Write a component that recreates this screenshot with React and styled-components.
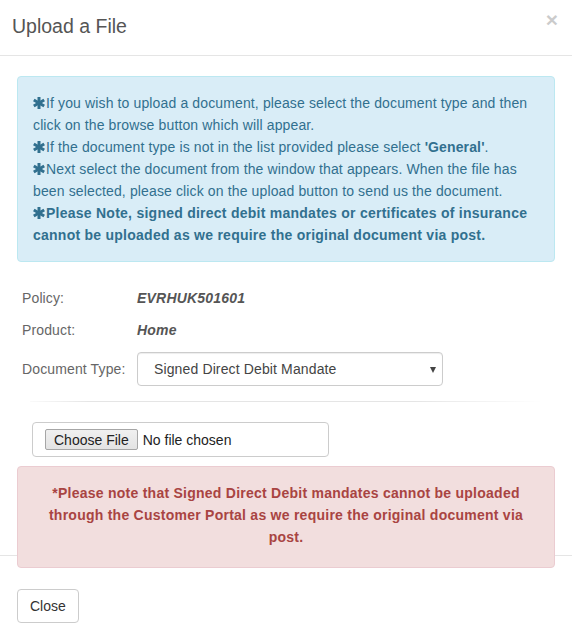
import React from 'react';
import styled, { createGlobalStyle } from 'styled-components';

const GlobalStyle = createGlobalStyle`
  * { box-sizing: border-box; }
  body {
    margin: 0;
    background: #fff;
    font-family: "Liberation Sans", Arial, sans-serif;
    font-size: 14px;
    color: #333;
  }
`;

const Modal = styled.div`
  width: 572px;
  min-height: 639px;
  background: #fff;
`;

const Header = styled.div`
  height: 56px;
  padding: 15px 14px 0 12px;
  border-bottom: 1px solid #e5e5e5;
  display: flex;
  justify-content: space-between;
  align-items: flex-start;
`;

const Title = styled.h4`
  margin: 0;
  font-size: 19.5px;
  line-height: 22px;
  font-weight: 400;
  color: #555;
`;

const CloseX = styled.button`
  border: 0;
  background: none;
  padding: 0;
  margin-top: -6px;
  font-family: "Liberation Sans", Arial, sans-serif;
  font-size: 21px;
  font-weight: 700;
  line-height: 21px;
  color: #000;
  opacity: 0.2;
  cursor: pointer;
`;

const Body = styled.div`
  padding: 20px 17px 0;
`;

const Alert = styled.div`
  border: 1px solid ${p => p.border};
  background: ${p => p.bg};
  color: ${p => p.color};
  border-radius: 4px;
  padding: ${p => p.pad || '15px'};
  line-height: 22px;
  font-size: 14px;
  letter-spacing: 0.13px;
`;

const DangerAlert = styled(Alert)`
  position: relative;
  z-index: 1;
  margin-top: 9px;
  margin-bottom: -13px;
  text-align: center;
  font-weight: 700;
  letter-spacing: 0.25px;
`;

const Note = styled.div`
  font-weight: ${p => (p.strong ? 700 : 400)};
  letter-spacing: ${p => (p.strong ? '0.25px' : 'inherit')};
`;

const Star = styled.svg`
  width: 12px;
  height: 12px;
  margin-right: 1px;
  vertical-align: -1px;
`;

const Asterisk = () => (
  <Star viewBox="0 0 12 12">
    <g stroke="currentColor" strokeWidth="3">
      <line x1="6" y1="0" x2="6" y2="12" />
      <line x1="0.8" y1="3" x2="11.2" y2="9" />
      <line x1="0.8" y1="9" x2="11.2" y2="3" />
    </g>
  </Star>
);

const Details = styled.div`
  margin-top: 26px;
  padding-left: 5px;
  display: grid;
  grid-template-columns: 115px 306px;
  row-gap: 12px;
  align-items: center;
  line-height: 20px;
  letter-spacing: 0.13px;
`;

const Label = styled.div`
  color: #666;
`;

const Value = styled.div`
  color: #555;
  font-weight: 700;
  font-style: italic;
  letter-spacing: 0.2px;
`;

const SelectWrap = styled.div`
  position: relative;

  &::after {
    content: '';
    position: absolute;
    right: 7px;
    top: 15px;
    border-left: 3.5px solid transparent;
    border-right: 3.5px solid transparent;
    border-top: 6px solid #444;
    pointer-events: none;
  }
`;

const Select = styled.select`
  appearance: none;
  width: 100%;
  height: 34px;
  padding: 0 24px 0 16px;
  border: 1px solid #ccc;
  border-radius: 4px;
  background: #fff;
  font-family: "Liberation Sans", Arial, sans-serif;
  font-size: 14px;
  letter-spacing: 0.13px;
  color: #444;
  box-shadow: inset 0 1px 1px rgba(0, 0, 0, 0.075);
`;

const Divider = styled.div`
  height: 1px;
  margin: 15px 13px 0;
  background: linear-gradient(to right, rgba(229, 229, 229, 0.2), #e5e5e5 12%, #e5e5e5 75%, rgba(229, 229, 229, 0));
`;

const FileBox = styled.div`
  margin: 20px 0 0 15px;
  width: 297px;
  height: 35px;
  padding: 0 12px;
  border: 1px solid #ccc;
  border-radius: 4px;
  display: flex;
  align-items: center;
`;

const FileInput = styled.input`
  font-family: "Liberation Sans", Arial, sans-serif;
  font-size: 14px;
  color: #222;

  &::file-selector-button {
    height: 21px;
    margin-right: 5px;
    padding: 0 8px;
    border: 1px solid #a6a6a6;
    border-radius: 2px;
    background: linear-gradient(#f0f0f0, #e3e3e3);
    font-family: "Liberation Sans", Arial, sans-serif;
    font-size: 14px;
    color: #222;
  }
`;

const Footer = styled.div`
  border-top: 1px solid #e5e5e5;
  padding: 33px 17px 17px;
`;

const Button = styled.button`
  height: 34px;
  padding: 6px 12px;
  border: 1px solid #ccc;
  border-radius: 4px;
  background: #fff;
  font-family: "Liberation Sans", Arial, sans-serif;
  font-size: 14px;
  line-height: 20px;
  color: #333;
`;

const App = () => (
  <>
    <GlobalStyle />
    <Modal>
      <Header>
        <Title>Upload a File</Title>
        <CloseX aria-label="Close">×</CloseX>
      </Header>
      <Body>
        <Alert bg="#d9edf7" border="#bce8f1" color="#31708f">
          <Note>
            <Asterisk />If you wish to upload a document, please select the document type and then
            <br />
            click on the browse button which will appear.
          </Note>
          <Note>
            <Asterisk />If the document type is not in the list provided please select <b>'General'</b>.
          </Note>
          <Note>
            <Asterisk />Next select the document from the window that appears. When the file has
            <br />
            been selected, please click on the upload button to send us the document.
          </Note>
          <Note strong>
            <Asterisk />Please Note, signed direct debit mandates or certificates of insurance
            <br />
            cannot be uploaded as we require the original document via post.
          </Note>
        </Alert>

        <Details>
          <Label>Policy:</Label>
          <Value>EVRHUK501601</Value>
          <Label>Product:</Label>
          <Value>Home</Value>
          <Label>Document Type:</Label>
          <SelectWrap>
            <Select defaultValue="dd">
              <option value="general">General</option>
              <option value="dd">Signed Direct Debit Mandate</option>
            </Select>
          </SelectWrap>
        </Details>

        <Divider />

        <FileBox>
          <FileInput type="file" />
        </FileBox>

        <DangerAlert bg="#f2dede" border="#ebccd1" color="#a94442" pad="15px 15px 19px">
          *Please note that Signed Direct Debit mandates cannot be uploaded
          <br />
          through the Customer Portal as we require the original document via
          <br />
          post.
        </DangerAlert>
      </Body>
      <Footer>
        <Button>Close</Button>
      </Footer>
    </Modal>
  </>
);

export default App;
